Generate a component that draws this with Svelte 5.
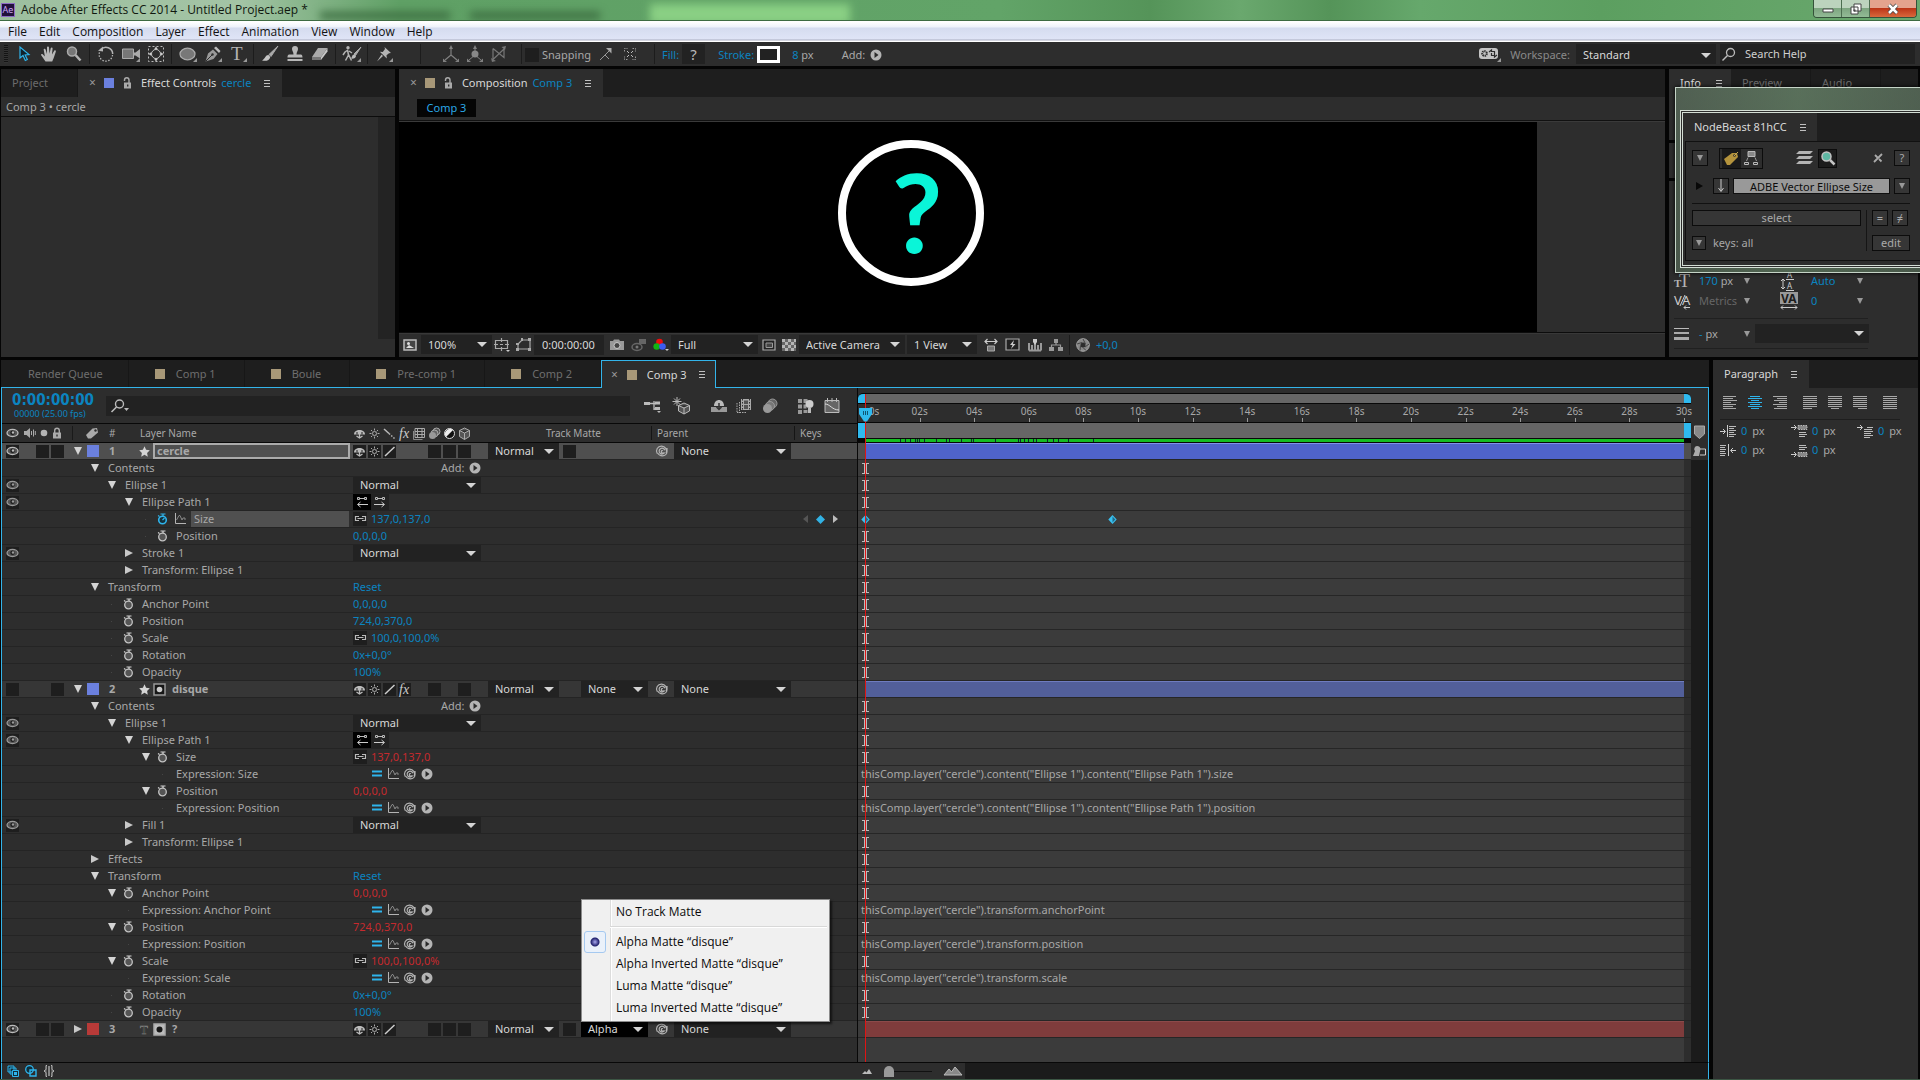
<script lang="ts">
  type Row = {
    kind: 'layer' | 'group' | 'prop' | 'expr';
    name: string;
    depth?: number;
    open?: boolean;
    leaf?: boolean;
    eye?: boolean;
    value?: string;
    red?: boolean;
    link?: boolean;
    add?: boolean;
    blend?: boolean;
    paths?: boolean;
    keyed?: boolean;
    code?: string;
    num?: number;
    color?: string;
    type?: string;
    matteIcon?: string;
    selected?: boolean;
    hidden?: boolean;
    av?: boolean[];
    switches?: string[];
    matte?: string;
    tbox?: boolean;
  };

  const menus = ['File', 'Edit', 'Composition', 'Layer', 'Effect', 'Animation', 'View', 'Window', 'Help'];
  const compTabs = ['Comp 1', 'Boule', 'Pre-comp 1', 'Comp 2'];
  const duration = 30;
  const secondKey = 9.06;
  const seconds = Array.from({ length: 16 }, (_, i) => i * 2);
  const matteModes = ['Alpha Matte “disque”', 'Alpha Inverted Matte “disque”', 'Luma Matte “disque”', 'Luma Inverted Matte “disque”'];
  const cacheGaps = [35, 40, 45, 50, 52, 54, 59, 71, 81, 84, 96, 106, 108, 130, 153, 155, 159, 163, 168, 171, 182, 188, 193, 203, 228];

  const rows: Row[] = [
    { kind: 'layer', name: 'cercle', num: 1, color: '#6b80de', type: 'star', selected: true, open: true, av: [true, true, true], switches: ['shy', 'sun', 'slash', '', '', 'box', 'box', 'box'], tbox: true },
    { kind: 'group', name: 'Contents', depth: 0, open: true, add: true },
    { kind: 'group', name: 'Ellipse 1', depth: 1, open: true, eye: true, blend: true },
    { kind: 'group', name: 'Ellipse Path 1', depth: 2, open: true, eye: true, paths: true },
    { kind: 'prop', name: 'Size', depth: 3, leaf: true, link: true, value: '137,0,137,0', keyed: true },
    { kind: 'prop', name: 'Position', depth: 3, leaf: true, value: '0,0,0,0' },
    { kind: 'group', name: 'Stroke 1', depth: 2, eye: true, blend: true },
    { kind: 'group', name: 'Transform: Ellipse 1', depth: 2 },
    { kind: 'group', name: 'Transform', depth: 0, open: true, value: 'Reset' },
    { kind: 'prop', name: 'Anchor Point', depth: 1, leaf: true, value: '0,0,0,0' },
    { kind: 'prop', name: 'Position', depth: 1, leaf: true, value: '724,0,370,0' },
    { kind: 'prop', name: 'Scale', depth: 1, leaf: true, link: true, value: '100,0,100,0%' },
    { kind: 'prop', name: 'Rotation', depth: 1, leaf: true, value: '0x+0,0°' },
    { kind: 'prop', name: 'Opacity', depth: 1, leaf: true, value: '100%' },
    { kind: 'layer', name: 'disque', num: 2, color: '#6b80de', type: 'star', matteIcon: 'matte', open: true, hidden: true, av: [true, false, true], switches: ['shy', 'sun', 'slash', 'fx', '', 'box', '', 'box'], matte: 'None' },
    { kind: 'group', name: 'Contents', depth: 0, open: true, add: true },
    { kind: 'group', name: 'Ellipse 1', depth: 1, open: true, eye: true, blend: true },
    { kind: 'group', name: 'Ellipse Path 1', depth: 2, open: true, eye: true, paths: true },
    { kind: 'prop', name: 'Size', depth: 3, open: true, link: true, value: '137,0,137,0', red: true },
    { kind: 'expr', name: 'Expression: Size', depth: 4, leaf: true, code: 'thisComp.layer("cercle").content("Ellipse 1").content("Ellipse Path 1").size' },
    { kind: 'prop', name: 'Position', depth: 3, open: true, value: '0,0,0,0', red: true },
    { kind: 'expr', name: 'Expression: Position', depth: 4, leaf: true, code: 'thisComp.layer("cercle").content("Ellipse 1").content("Ellipse Path 1").position' },
    { kind: 'group', name: 'Fill 1', depth: 2, eye: true, blend: true },
    { kind: 'group', name: 'Transform: Ellipse 1', depth: 2 },
    { kind: 'group', name: 'Effects', depth: 0 },
    { kind: 'group', name: 'Transform', depth: 0, open: true, value: 'Reset' },
    { kind: 'prop', name: 'Anchor Point', depth: 1, open: true, value: '0,0,0,0', red: true },
    { kind: 'expr', name: 'Expression: Anchor Point', depth: 2, leaf: true, code: 'thisComp.layer("cercle").transform.anchorPoint' },
    { kind: 'prop', name: 'Position', depth: 1, open: true, value: '724,0,370,0', red: true },
    { kind: 'expr', name: 'Expression: Position', depth: 2, leaf: true, code: 'thisComp.layer("cercle").transform.position' },
    { kind: 'prop', name: 'Scale', depth: 1, open: true, link: true, value: '100,0,100,0%', red: true },
    { kind: 'expr', name: 'Expression: Scale', depth: 2, leaf: true, code: 'thisComp.layer("cercle").transform.scale' },
    { kind: 'prop', name: 'Rotation', depth: 1, leaf: true, value: '0x+0,0°' },
    { kind: 'prop', name: 'Opacity', depth: 1, leaf: true, value: '100%' },
    { kind: 'layer', name: '?', num: 3, color: '#b83a38', type: 'text', matteIcon: 'matteInv', av: [true, true, true], switches: ['shy', 'sun', 'slash', '', '', 'box', 'box', 'box'], matte: 'Alpha', tbox: true },
  ];

  let menuOpen = $state(true);
  let matteMode = $state(0);

  const corner = '<path d="M18 13v4h-4z" fill="#999"/>';
  const lines = (xs: number[][]) => xs.map(([a, b], i) => `<path d="M${a} ${i * 2 + 0.5}H${b}"/>`).join('');

  // [width, height, body]
  const icons: Record<string, [number, number, string]> = {
    arrow: [18, 18, '<path d="M5 2v11l3-2.500 2.300 5 2-1-2.200-4.500 3.900-.5z" fill="#10222c" stroke="#2fb4ec" stroke-width="1.200"/>'],
    hand: [18, 18, '<path d="M5.500 16.500 1.200 10.300c-.6-1.100.8-1.800 1.700-.9l2 2L3.700 4.800c-.1-1.300 1.500-1.500 1.900-.3L7 9V2.600c0-1.400 1.900-1.400 2 0L9.500 8.700l1.200-5.500c.4-1.200 2-.9 1.900.4L12 9.500l2.200-3.700c.7-1 2-.3 1.600.9L13.700 13l-1.500 3.500z" fill="#b8b8b8"/>'],
    zoom: [18, 18, '<circle cx="7" cy="6.500" r="4.500" fill="#777" stroke="#aaa" stroke-width="1.500"/><path d="m10.500 10 5 5.500" stroke="#b4b4b4" stroke-width="2.500"/>'],
    rotate: [18, 18, '<path d="M4 4.500A6.700 6.700 0 0 1 15.700 9" fill="none" stroke="#b4b4b4" stroke-width="1.500"/><path d="M15.500 10A6.700 6.700 0 1 1 2.600 7" fill="none" stroke="#b4b4b4" stroke-width="1.300" stroke-dasharray="1.500 1.500"/><path d="m1 5.800 5-4.200v5z" fill="#b4b4b4"/>'],
    camera: [18, 18, '<path d="M.5 4h11v9.500H.5z" fill="#777" stroke="#aaa"/><path d="M12 7.500h1.500L18 4v9.500l-4.500-3H12z" fill="#aaa"/>' + corner],
    panBehind: [18, 18, '<path d="M1.500 1.500h15v15h-15z" fill="none" stroke="#bbb" stroke-dasharray="2 2"/><circle cx="9" cy="9" r="4.500" fill="none" stroke="#bbb"/><path d="m9 1.500 2 3H7zM9 16.500l2-3H7zM1.500 9l3-2v4zM16.500 9l-3-2v4z" fill="#ccc"/>'],
    ellipse: [18, 18, '<ellipse cx="8.500" cy="9" rx="7.500" ry="5.800" fill="#787878" stroke="#aaa" stroke-width="1.300"/>' + corner],
    pen: [18, 18, '<path d="M1.500 16.500 4 8.500l5-4 4.500 4.500-4 5z" fill="#999"/><path d="m2 16 6-6" stroke="#2d2d2d"/><circle cx="8.500" cy="9.500" r="1.200" fill="#2d2d2d"/><path d="m10 3 2-1.500 4.500 4.500L15 8z" fill="#bbb"/>' + corner],
    type: [18, 18, '<text x="2" y="15" font-family="Liberation Serif, serif" font-size="19" fill="#b4b4b4">T</text>' + corner],
    brush: [18, 18, '<path d="m17 1-9 8.500 2 2z" fill="#aaa" stroke="#aaa"/><path d="M7.500 10c-3-.3-3 3.500-6.500 5.500 4 1 7.500 0 8.300-3.500z" fill="#c4c4c4"/>'],
    stamp: [18, 18, '<path d="M9 1a3 3 0 0 1 3 3c0 2-1.500 3-1.500 5.500H15c1.500 0 1.500 3 1.500 3h-15s0-3 1.500-3h4.500C7.500 7 6 6 6 4a3 3 0 0 1 3-3zM1.500 14h15v2h-15z" fill="#b8b8b8"/>'],
    eraser: [18, 18, '<path d="M7 3h9.500l-6.500 9H1z" fill="#aaa"/><path d="M1 12h9v3H1z" fill="#777"/><path d="m10 12 6.500-9v3.500L10 15z" fill="#c8c8c8"/>'],
    roto: [20, 18, '<circle cx="6" cy="2.800" r="1.700" fill="#b4b4b4"/><path d="m6 5-3 2-2 3M5.500 5l1 5-3 5.500M6.500 9.500l3 6M7 6l3 2" stroke="#b4b4b4" stroke-width="1.500" fill="none"/><path d="m19 2-7 7 1.500 1.500z" fill="#aaa" stroke="#aaa"/><path d="M12 9.500c-2 0-2 3-3 4 2.500.5 5-.5 5-2.500z" fill="#bbb"/><path d="M19 13v4h-4z" fill="#999"/>'],
    pin: [18, 18, '<path d="m9.500 2 6.500 6-2 .3-2.500 2 .3 3.200-7-6.700 3 .2 2.200-3zM6.500 9.500 8 11l-6 5.500z" fill="#b4b4b4"/>' + corner],
    axis: [18, 18, '<path d="M9 10V2M9 10l-6 5M9 10l6 5" stroke="#808080" fill="none" stroke-width="1.200"/><path d="m9 0 2 4H7zM1 13.500v3.500h4zM17 13.500v3.500h-4z" fill="#808080"/>'],
    axisBall: [18, 18, '<path d="M9 10V2M9 10l-6 5M9 10l6 5" stroke="#808080" fill="none"/><circle cx="9" cy="9" r="3.500" fill="#888"/><path d="m9 0 2 4H7zM1 13.500v3.500h4zM17 13.500v3.500h-4z" fill="#808080"/>'],
    axisView: [18, 18, '<path d="M3 3.500v11M3 3.500l11 9V3.500M3 14.500 14 4" stroke="#777" fill="none" stroke-width="1.200"/><path d="m16 1-4.500 1 3.500 3zM1 13l1 4 4-1z" fill="#777"/>'],
    snapA: [14, 14, '<path d="m1 13 5-5 4 4M6 8l6-6" stroke="#999" fill="none"/><path d="M7 1h5.500v5.500z" fill="#aaa"/>'],
    snapB: [14, 14, '<path d="M1.500 4.500v-3h3M9.500 1.500h3v3M12.500 9.500v3h-3M4.500 12.500h-3v-3" stroke="#999" fill="none" stroke-dasharray="1.500 1"/><path d="m4 4 2 2M10 4 8 6M4 10l2-2M10 10 8 8" stroke="#bbb"/>'],
    play: [12, 12, '<circle cx="6" cy="6" r="5.500" fill="#b4b4b4"/><path d="m4.500 3 4 3-4 3z" fill="#2a2a2a"/>'],
    sync: [22, 16, '<rect x="0" y="2" width="19" height="11" rx="3" fill="#c4c4c4"/><circle cx="5.500" cy="7.500" r="2.300" fill="none" stroke="#2d2d2d" stroke-width="2" stroke-dasharray="1.300 .6"/><path d="M10 6l2.500-2v1.500h3v4M18 9l-2.500 2v-1.500h-3V7" fill="none" stroke="#2d2d2d" stroke-width="1.200"/><path d="M22 12v4h-4z" fill="#999"/>'],
    search: [14, 14, '<circle cx="8.500" cy="5.500" r="4" fill="none" stroke="#bbb" stroke-width="1.300"/><path d="m5.500 8.500-5 5" stroke="#bbb" stroke-width="1.500"/>'],
    searchDrop: [20, 14, '<circle cx="8.500" cy="5" r="4" fill="none" stroke="#bbb" stroke-width="1.400"/><path d="m5.500 8-5 5" stroke="#bbb" stroke-width="1.600"/><path d="M13 9h5l-2.500 3z" fill="#bbb"/>'],
    lock: [9, 12, '<path d="M1.500 4V3a2.200 2.200 0 0 1 4.500 0v3" fill="none" stroke="#aaa" stroke-width="1.400"/><path d="M1 5.500h7v6H1z" fill="#aaa"/><path d="M4 7.500h1.400v2H4z" fill="#2d2d2d"/>'],
    lockShut: [10, 12, '<path d="M2.700 6V3.500a2.200 2.200 0 0 1 4.600 0V6" fill="none" stroke="#aaa" stroke-width="1.400"/><path d="M1 5.500h8v6H1z" fill="#aaa"/><path d="M4.300 7.500h1.400v2H4.300z" fill="#2d2d2d"/>'],
    burger: [8, 9, '<path d="M1 1.500h6M1 4.500h6M1 7.500h6" stroke="#c0c0c0"/>'],
    eye: [13, 10, '<ellipse cx="6.500" cy="5" rx="5.500" ry="3.600" fill="#555" stroke="currentColor" stroke-width="1.300"/><circle cx="6.500" cy="4.800" r="2.200" fill="#1e1e1e"/><circle cx="7" cy="4.500" r="1.200" fill="currentColor"/>'],
    speaker: [13, 12, '<path d="M1 4h2.500L7 1v10L3.500 8H1z" fill="#aaa"/><path d="M8.500 4v4M10.500 2.500v7M12.300 4v4" stroke="#aaa"/>'],
    dot: [8, 8, '<circle cx="4" cy="4" r="3.300" fill="#b4b4b4"/>'],
    tag: [14, 12, '<path d="m1 8 6.500-6.500L12 1l1 4.500L6 11.500H3z" fill="#aaa"/><circle cx="10.500" cy="3.500" r="1.200" fill="#2d2d2d"/>'],
    star: [11, 11, '<path d="m5.500.3 1.600 3.500 3.700.5-2.700 2.600.7 3.800-3.300-1.900-3.300 1.900.7-3.800L.2 4.300l3.700-.5z" fill="#d4d4d4"/>'],
    text: [11, 12, '<text x="1" y="11" font-family="Liberation Serif, serif" font-size="13" fill="#0a0a0a" stroke="#888" stroke-width=".5">T</text>'],
    matte: [13, 13, '<path d="M1 1h11v11H1z" fill="#161616" stroke="#999" stroke-width="1.500"/><circle cx="6.500" cy="6.500" r="2.800" fill="#ccc"/>'],
    matteInv: [13, 13, '<path d="M1 1h11v11H1z" fill="#bbb" stroke="#aaa" stroke-width="1.500"/><circle cx="6.500" cy="6.500" r="3" fill="#161616"/>'],
    shy: [13, 13, '<path d="M1 7.500C1 4.500 3.500 3 6.500 3S12 4.500 12 7.500z" fill="#bbb"/><path d="M4 5v2.500M9 5v2.500" stroke="#222"/><path d="M6.500 7v4M3.500 9l3 2 3-2" stroke="#bbb" fill="none" stroke-width="1.300"/>'],
    sun: [13, 13, '<circle cx="6.500" cy="6.500" r="2" fill="none" stroke="currentColor"/><path d="M6.500 1.500v2M6.500 9.500v2M1.500 6.500h2M9.500 6.500h2M3 3l1.300 1.300M8.700 8.700 10 10M3 10l1.300-1.300M8.700 4.300 10 3" stroke="currentColor"/>'],
    slash: [13, 13, '<path d="M2 11 11.500 2" stroke="#ccc" stroke-width="1.500"/>'],
    quality: [13, 13, '<path d="m1 2 5 4.500" stroke="#bbb" stroke-width="1.500"/><path d="m6 6.500 5.500 5" stroke="#bbb" stroke-width="1.500" stroke-dasharray="1.500 1.500"/>'],
    fx: [13, 13, '<text x="1" y="11" font-family="Liberation Serif, serif" font-style="italic" font-size="14" fill="#ccc">fx</text>'],
    film: [13, 13, '<path d="M2 1.500h9.500v9H2z" fill="none" stroke="#aaa"/><path d="M4.500 1v10M9 1v10M2 4.500h9.500M2 7.500h9.500" stroke="#aaa"/><path d="M.5 4v8.500h9" fill="none" stroke="#888"/>'],
    blur: [13, 13, '<circle cx="8.500" cy="4.500" r="3.500" fill="#555" stroke="#aaa"/><circle cx="6.500" cy="6.500" r="3.500" fill="#666" stroke="#aaa"/><circle cx="4.500" cy="8.500" r="3.500" fill="#999"/>'],
    adjust: [13, 13, '<circle cx="6.500" cy="6.500" r="5" fill="#111" stroke="#ddd"/><path d="M3 10 10 3A5 5 0 0 0 3 10z" fill="#eee"/>'],
    cube: [13, 13, '<path d="m6.500 1 5 2.500v6l-5 3-5-3v-6zM1.500 3.500l5 2.500 5-2.500M6.500 6v6.500" fill="#555" stroke="#aaa"/>'],
    stopwatch: [11, 12, '<circle cx="5.500" cy="7" r="3.800" fill="#555" stroke="#c4c4c4" stroke-width="1.300"/><path d="M3.500 1h5M6 1v2M1 2.500l1.500 1" stroke="#d4d4d4" stroke-width="1.200"/>'],
    stopwatchOn: [11, 12, '<circle cx="5.500" cy="7" r="3.800" fill="#12303c" stroke="#2fb4ec" stroke-width="1.600"/><path d="M3.500 1h5M6 1v2M1 2.500l1.500 1M5.500 7l2-2" stroke="#2fb4ec" stroke-width="1.200"/>'],
    graph: [12, 12, '<path d="M1.500 0v10.500H12" fill="none" stroke="#b4b4b4"/><path d="M2.500 7 5 2.500h1L8 7l1-2h2v2" fill="none" stroke="#888"/>'],
    whip: [12, 12, '<path d="M1.200 8.500A5 5 0 1 1 10 8.300M11 3v3.500c0 2.400-2 4.300-4.500 4.300-2.500 0-4-1.200-5-2.800M8.600 7.500A2.900 2.900 0 1 1 8.800 5.200M8.600 7.500C7.500 8.700 5.300 8.200 5.300 6.500 5.300 5.500 6.500 5.300 6.800 6" fill="none" stroke="#b4b4b4" stroke-width="1.200"/>'],
    equal: [10, 8, '<path d="M0 1.500h10M0 5.500h10" stroke="#2fb4ec" stroke-width="2"/>'],
    link: [13, 8, '<path d="M5 1.500H1.500v4H5M8 1.500h3.500v4H8M3.500 3.500h6" fill="none" stroke="#bbb" stroke-width="1.200"/>'],
    pathL: [12, 12, '<path d="M4 2.500h4" stroke="#bbb"/><path d="M1.500 1.500h2v2h-2zM8.500 1.500h2v2h-2z" fill="#222" stroke="#bbb"/><path d="M2 8.500h10M4.500 6 1.500 8.500l3 2.500" fill="none" stroke="#ccc"/>'],
    pathR: [12, 12, '<path d="M4 2.500h4" stroke="#bbb"/><path d="M1.500 1.500h2v2h-2zM8.500 1.500h2v2h-2z" fill="#222" stroke="#bbb"/><path d="M0 8.500h10M7.500 6l3 2.500-3 2.500" fill="none" stroke="#ccc"/>'],
    flow: [18, 14, '<path d="M0 4.500h5M5 3v3M6 4.500h4M10 2v9M10 4.500h2M10 10h2" stroke="#bbb" fill="none" stroke-width="1.300"/><path d="M0 3h6v3H0zM11 2.500h5v3h-5zM11 8h5v3h-5z" fill="#bbb"/><path d="M13 12h4l-2 2z" fill="#bbb"/>'],
    draft: [20, 18, '<path d="M5 0v9M.500 4.500h9M2 1.500l6 6M8 1.500l-6 6" stroke="#bbb"/><path d="m12 6 5.500 2.500v5.500L12 17l-5.500-3V8.500zM6.500 8.500 12 11l5.500-2.500M12 11v6" fill="#555" stroke="#bbb"/>'],
    shyBig: [16, 16, '<path d="M0 9h16v5H0z" fill="#999"/><path d="M3 8c0-4 2.500-6 5-6s5 2 5 6z" fill="#bbb"/><path d="M8 5v6M5.500 9 8 11.500 10.500 9" stroke="#333" fill="none" stroke-width="1.500"/>'],
    filmBig: [16, 16, '<path d="M5 1h10v11H5z" fill="#aaa"/><path d="M8 2.500h4v3.500H8zM8 7h4v4H8z" fill="#555"/><path d="M6.500 1v11M13.500 1v11" stroke="#333" stroke-dasharray="1.500 1.500"/><path d="M1 5v10M3.500 4v11M1 14.500h9" stroke="#aaa" stroke-dasharray="1.500 1"/>'],
    blurBig: [16, 16, '<circle cx="10.500" cy="5.500" r="4.500" fill="#666" stroke="#999"/><circle cx="8" cy="8" r="4.500" fill="#777" stroke="#999"/><circle cx="5.500" cy="10.500" r="4.500" fill="#999"/>'],
    brain: [18, 16, '<path d="M1 1h4v4H1zM6.500 1h4v4h-4zM1 6.500h4v4H1zM6.500 6.500h3v4h-3zM1 12h4v4H1zM6.500 12h4v3h-4z" fill="#999"/><circle cx="12.500" cy="6" r="4" fill="#ccc"/><path d="M11 10h3v5h-3z" fill="#bbb"/>'],
    graphBig: [16, 16, '<path d="M1 2.500h14v12H1z" fill="#666" stroke="#bbb"/><path d="M1 6c5 0 7 6 14 6" stroke="#ddd" fill="none"/><path d="M3.500 0v4M8 0v4M12.500 0v4" stroke="#bbb"/>'],
    monitor: [14, 12, '<path d="M1 1h12v10H1z" fill="#444" stroke="#bbb" stroke-width="1.500"/><path d="m3 9 3-3 5 3z" fill="#ddd"/><circle cx="5.500" cy="4.500" r="1.500" fill="#ddd"/>'],
    grid: [16, 14, '<path d="M1.500 2.500h12v8h-12zM7.500 0v4M7.500 9v4M0 6.500h4M11 6.500h4M6 6.500h3" fill="none" stroke="#aaa" stroke-width="1.200"/><path d="M12 12h4l-2 2z" fill="#ccc"/>'],
    mask: [16, 14, '<path d="M2 11V6l4-4h8v9z" fill="none" stroke="#aaa" stroke-width="1.200"/><path d="M0 10h3v3H0zM12 10h3v3h-3zM12 0h3v3h-3zM5 0h2v3H5zM0 5h3v2H0z" fill="#aaa"/>'],
    photo: [16, 12, '<path d="M1 2h3l1-1.500h5L11 2h4v9H1z" fill="#999"/><circle cx="8" cy="6.500" r="3" fill="#444" stroke="#ccc"/>'],
    eyeCam: [16, 14, '<ellipse cx="6" cy="9" rx="5" ry="3.500" fill="none" stroke="#666" stroke-width="1.500"/><circle cx="6" cy="9" r="1.500" fill="#777"/><path d="M8 1h7v5H8z" fill="#666"/>'],
    rgb: [16, 14, '<circle cx="6.500" cy="4" r="3.300" fill="#f00c0c"/><circle cx="3.700" cy="8.500" r="3.300" fill="#12b412"/><circle cx="9.500" cy="8.500" r="3.300" fill="#3c5cf0"/><path d="M12 11h4l-2 2z" fill="#ccc"/>'],
    roi: [14, 12, '<path d="M1 1h12v10H1z" fill="#222" stroke="#aaa" stroke-width="1.200"/><path d="M4 4h6.500v4.500H4z" fill="#444" stroke="#999"/>'],
    checker: [14, 12, '<path d="M0 0h14v12H0z" fill="#666"/><path d="M0 0h3v3H0zM6 0h3v3H6zM12 0h2v3h-2zM3 3h3v3H3zM9 3h3v3H9zM0 6h3v3H0zM6 6h3v3H6zM12 6h2v3h-2zM3 9h3v3H3zM9 9h3v3H9z" fill="#b4b4b4"/>'],
    ratio: [16, 14, '<path d="M2 3.500h12M4.500 1 2 3.500 4.500 6M11.500 1 14 3.500 11.500 6" fill="none" stroke="#ccc" stroke-width="1.200"/><path d="M4.500 8h7v5h-7z" fill="#777" stroke="#aaa"/>'],
    fast: [16, 14, '<path d="M1 1h13v11H1z" fill="#222" stroke="#aaa" stroke-width="1.200"/><path d="m9 2-4 5h2.500L6 11l4.500-5H8z" fill="#ccc"/>'],
    tl: [16, 12, '<path d="M2 11.500V4M5 11.500V6M8 11.500V4M11 11.500V6M14 11.500V4M2 11.500h12" stroke="#999" stroke-width="2"/><path d="M6 0h4v3L8 6 6 3z" fill="#ccc"/>'],
    chart: [14, 12, '<path d="M5 0h4v4H5zM0 8h5v4H0zM9 8h5v4H9z" fill="#999"/><path d="M7 4v2M2.500 8V6h9v2" fill="none" stroke="#999" stroke-width="1.200"/>'],
    shutter: [14, 14, '<circle cx="7" cy="7" r="6.300" fill="#888" stroke="#aaa"/><circle cx="7" cy="7" r="2.500" fill="#2d2d2d"/><path d="M7 1 9.500 6M13 6 9 9M10 12.500 7 9.500M4 12.500 4.500 7.500M1 6l5-1.500" stroke="#444"/>'],
    left: [14, 14, `<g stroke="currentColor">${lines([[0, 13], [0, 10], [0, 14], [0, 8], [0, 13], [0, 10], [0, 13]])}</g>`],
    center: [14, 14, `<g stroke="currentColor">${lines([[2, 12], [0, 14], [3, 11], [0, 14], [2, 12], [0, 14], [3, 11]])}</g>`],
    right: [14, 14, `<g stroke="currentColor">${lines([[0, 14], [4, 14], [1, 14], [6, 14], [0, 14], [4, 14], [1, 14]])}</g>`],
    justL: [14, 14, `<g stroke="currentColor">${lines([[0, 14], [0, 14], [0, 14], [0, 14], [0, 14], [0, 14], [0, 9]])}</g>`],
    justC: [14, 14, `<g stroke="currentColor">${lines([[0, 14], [0, 14], [0, 14], [0, 14], [0, 14], [0, 14], [3, 11]])}</g>`],
    justR: [14, 14, `<g stroke="currentColor">${lines([[0, 14], [0, 14], [0, 14], [0, 14], [0, 14], [0, 14], [5, 14]])}</g>`],
    justA: [14, 14, `<g stroke="currentColor">${lines([[0, 14], [0, 14], [0, 14], [0, 14], [0, 14], [0, 14], [0, 14]])}</g>`],
    indentL: [16, 14, '<path d="M0 7.500h5M3 5l2.500 2.500L3 10M7.500 1v12" fill="none" stroke="#ccc"/><path d="M9 2.500h7M9 4.500h5M9 6.500h7M9 8.500h5M9 10.500h7M9 12.500h5" stroke="#bbb"/>'],
    indentR: [16, 14, '<path d="M16 7.500h-5M13 5l-2.500 2.500L13 10M8.500 1v12" fill="none" stroke="#ccc"/><path d="M0 2.500h6M0 4.500h5M0 6.500h6M0 8.500h5M0 10.500h6M0 12.500h5" stroke="#bbb"/>'],
    before: [16, 14, '<path d="M0 3.500h5M3 1l2.500 2.500L3 6" fill="none" stroke="#ccc"/><path d="M7 1.500h9v4H7z" fill="#888" stroke="#bbb" stroke-dasharray="1.500 1"/><path d="M8 8.500h7M8 10.500h8M8 12.500h6" stroke="#bbb"/>'],
    after: [16, 14, '<path d="M0 11.500h5M3 9l2.500 2.500L3 14" fill="none" stroke="#ccc"/><path d="M7 9.500h9v4H7z" fill="#888" stroke="#bbb" stroke-dasharray="1.500 1"/><path d="M8 2.500h7M8 4.500h8M8 6.500h6" stroke="#bbb"/>'],
    first: [16, 14, '<path d="M0 3.500h5M3 1l2.500 2.500L3 6" fill="none" stroke="#ccc"/><path d="M10 3.500h6M7 5.500h8M7 7.500h9M7 9.500h7M7 11.500h9M7 13.500h6" stroke="#bbb"/>'],
    fontSize: [16, 14, '<text x="0" y="13" font-family="Liberation Serif, serif" font-weight="bold" font-size="11" fill="#b4b4b4">T</text><text x="5" y="13" font-family="Liberation Serif, serif" font-size="18" fill="#b4b4b4">T</text>'],
    leading: [16, 20, '<text x="7" y="7" font-family="Noto Sans, sans-serif" font-size="8" fill="#ccc">A</text><text x="7" y="18" font-family="Noto Sans, sans-serif" font-size="8" fill="#ccc">A</text><path d="M3 8v10M1 10l2-2 2 2M1 16l2 2 2-2M6 8.500h8M6 19.500h8" fill="none" stroke="#ccc"/>'],
    kerning: [18, 16, '<text x="0" y="12" font-family="Noto Sans, sans-serif" font-size="13" fill="#ccc">V</text><text x="8" y="12" font-family="Noto Sans, sans-serif" font-size="13" fill="#ccc">A</text><path d="M11 2 6 13M10 14.500h6M12 12.500l-2 2 2 2" fill="none" stroke="#ccc"/>'],
    tracking: [18, 18, '<path d="M0 0h18v12H0z" fill="#999"/><text x="1" y="11" font-family="Noto Sans, sans-serif" font-weight="bold" font-size="12" fill="#1c1c1c">VA</text><path d="M1 15.500h16M3 13.500l-2 2 2 2M15 13.500l2 2-2 2" fill="none" stroke="#ccc"/>'],
    strokeW: [15, 14, '<path d="M0 1.500h15" stroke="#bbb"/><path d="M0 6h15" stroke="#aaa" stroke-width="2"/><path d="M0 11.500h15" stroke="#aaa" stroke-width="3"/>'],
    gold: [17, 16, '<path d="m1 9 8-6h5l1 4-8 8H4z" fill="#b4933c"/><circle cx="11.500" cy="5.500" r="1.300" fill="#2a2a2a"/><path d="m11 6 4-4" stroke="#c8a850"/>'],
    tree: [16, 16, '<path d="M5 1.500h7v5H5z" fill="#888" stroke="#bbb"/><path d="M5 7.500 3.500 11M12 7.500l1.500 3.500" fill="none" stroke="#999"/><path d="M1.500 12.500h4v2h-4zM10.500 12.500h4v2h-4z" fill="#333" stroke="#bbb"/>'],
    stack: [18, 14, '<path d="M3 0h14l-3 3H0zM3 5h14l-3 3H0zM3 10h14l-3 3H0z" fill="#b4b4b4"/>'],
    lens: [16, 16, '<circle cx="6.500" cy="6.500" r="4.500" fill="#5fb8a4" stroke="#c4c4c4" stroke-width="1.500"/><path d="m10 10 4.500 4.500" stroke="#c4c4c4" stroke-width="2.500"/>'],
    cross: [10, 10, '<path d="m1 9 8-8M2 2l2.500 2.500M6 6l2.500 2.500" stroke="#aaa" stroke-width="1.800"/>'],
    down: [8, 14, '<path d="M4 0v12M1.500 9 4 12.500 6.500 9" fill="none" stroke="#ccc"/>'],
    layersBlue: [12, 12, '<path d="M1 1h6v6H1zM3 3h6v6H3z" fill="#10303c" stroke="#2fb4ec"/><path d="M5.500 5.500h6v6h-6z" fill="#10303c" stroke="#2fb4ec"/><path d="M7 7h3v3H7z" fill="#2fb4ec"/>'],
    modesBlue: [12, 12, '<circle cx="4.500" cy="4.500" r="3.800" fill="#10303c" stroke="#2fb4ec" stroke-width="1.300"/><path d="M5 5h6v6H5z" fill="none" stroke="#2fb4ec" stroke-width="1.400"/>'],
    braces: [12, 12, '<path d="M4 .5H3v4L1 6l2 1.500v4h1M8 .5h1v4L11 6 9 7.500v4H8" fill="#555" stroke="#bbb"/><path d="M5 1h2v10H5z" fill="#888"/>'],
    hills: [10, 6, '<path d="m0 6 3-3 1.500 1.500L7 1l3 5z" fill="#bbb"/>'],
    hillsBig: [18, 8, '<path d="m0 8 5-6 2.500 3L11 0l7 8z" fill="#888" stroke="#bbb"/>'],
    shield: [11, 14, '<path d="M.5 1h10v8l-5 4.500-5-4.500z" fill="#888" stroke="#aaa"/>'],
    compBtn: [13, 12, '<path d="M4 1a3.500 3.500 0 0 1 3.500 3L6 11H0l2-5A3 3 0 0 1 4 1z" fill="#aaa"/><path d="M7 4h5.500v6H7" fill="none" stroke="#ccc"/>'],
    cti: [13, 14, '<path d="M0 0h13v6L8 13.500H5L0 6z" fill="#2fb9ee"/><path d="M4.500 3v4M6.500 3v4M8.500 3v4" stroke="#0e5674"/>'],
    ibeam: [9, 13, '<path d="M1 1.500h3M5 1.500h3M1 11.500h3M5 11.500h3" fill="none" stroke="#bbb"/><path d="M3.500 1v11M5.500 1v11" stroke="#bbb"/>'],
    key: [9, 9, '<path d="m4.500 0 4.200 4.500L4.500 9 .3 4.500z" fill="#38c0f0"/><path d="M4.500 1.500 7.300 4.500 4.500 7.500z" fill="#226a88"/>'],
    keyNow: [9, 9, '<path d="m4.500 0 4.500 4.500L4.500 9 0 4.500z" fill="#32b2e4"/>'],
  };
</script>

{#snippet icon(name: string)}
  <svg width={icons[name][0]} height={icons[name][1]} viewBox="0 0 {icons[name][0]} {icons[name][1]}" aria-hidden="true">{@html icons[name][2]}</svg>
{/snippet}

{#snippet dropdown(label: string, value: string, cls: string)}
  <span class="drop {cls}">
    <select aria-label={label}><option>{value}</option></select>
    <i></i>
  </span>
{/snippet}

{#snippet twirl(open: boolean | undefined, leaf: boolean | undefined)}
  <span class="twirl" class:open class:leaf></span>
{/snippet}

<div class="app">
  <header class="titlebar">
    <span class="ae">Ae</span>
    <span class="title">Adobe After Effects CC 2014 - Untitled Project.aep *</span>
    <span class="ghost g1"></span>
    <span class="ghost g2"></span>
    <span class="ghost g3"></span>
    <div class="winbtns">
      <button type="button" aria-label="Minimize"><svg width="12" height="10"><path d="M1 5h10v3H1z" fill="#fff" stroke="#444" /></svg></button>
      <button type="button" aria-label="Restore"><svg width="12" height="12"><path d="M4 1h7v7H4zM1 4h7v7H1z" fill="#fff" stroke="#444" /><path d="M3.500 6.500h2v2h-2z" fill="#444" /></svg></button>
      <button type="button" class="close" aria-label="Close"><svg width="12" height="10"><path d="m2 1 8 8M10 1 2 9" stroke="#444" stroke-width="4" /><path d="m2 1 8 8M10 1 2 9" stroke="#fff" stroke-width="2.500" /></svg></button>
    </div>
  </header>

  <nav class="menubar">
    {#each menus as item}<button type="button">{item}</button>{/each}
  </nav>

  <div class="toolbar">
    <span class="grip"></span>
    {#each ['arrow', 'hand', 'zoom', '|', 'rotate', 'camera', 'panBehind', '|', 'ellipse', 'pen', 'type', '|', 'brush', 'stamp', 'eraser', '|', 'roto', '|', 'pin'] as tool}
      {#if tool === '|'}<span class="sep"></span>{:else}<button type="button" class="tool" aria-label={tool}>{@render icon(tool)}</button>{/if}
    {/each}
    <span class="sep wide"></span>
    <span class="axes">{@render icon('axis')}{@render icon('axisBall')}{@render icon('axisView')}</span>
    <span class="sep"></span>
    <label class="snap low"><input type="checkbox" />Snapping</label>
    <span class="snaps">{@render icon('snapA')}{@render icon('snapB')}</span>
    <span class="sep"></span>
    <button type="button" class="blue low">Fill:</button>
    <button type="button" class="fill">?</button>
    <button type="button" class="blue low">Stroke:</button>
    <button type="button" class="swatch" aria-label="Stroke color"></button>
    <span class="px low"><b>8</b> px</span>
    <button type="button" class="add low">Add: {@render icon('play')}</button>
    <span class="grow"></span>
    {@render icon('sync')}
    <span class="ws low">Workspace:</span>
    {@render dropdown('Workspace', 'Standard', 'tall standard')}
    <label class="help">{@render icon('search')}<input value="Search Help" aria-label="Search Help" /></label>
  </div>

  <div class="upper">
    <section class="panel effects">
      <div class="tabs">
        <button type="button" class="tab dim project">Project</button>
        <div class="tab on"><span class="x">×</span><i class="chip violet"></i>{@render icon('lock')}<span>Effect Controls <em>cercle</em></span>{@render icon('burger')}</div>
      </div>
      <p class="crumb">Comp 3 • cercle</p>
      <div class="fxbody"><span></span></div>
    </section>

    <section class="panel comp">
      <div class="tabs">
        <div class="tab on"><span class="x">×</span><i class="chip"></i>{@render icon('lock')}<span>Composition <em>Comp 3</em></span>{@render icon('burger')}</div>
      </div>
      <div class="flowbar"><button type="button">Comp 3</button></div>
      <div class="viewer">
        <div class="canvas">
          <div class="badge">?</div>
        </div>
      </div>
      <div class="viewbar">
        {@render icon('monitor')}
        {@render dropdown('Magnification', '100%', 'tall mag')}
        {@render icon('grid')}{@render icon('mask')}
        <span class="tc">0:00:00:00</span>
        {@render icon('photo')}{@render icon('eyeCam')}{@render icon('rgb')}
        {@render dropdown('Resolution', 'Full', 'tall res')}
        {@render icon('roi')}{@render icon('checker')}
        {@render dropdown('3D view', 'Active Camera', 'tall cam')}
        {@render dropdown('View layout', '1 View', 'tall views')}
        {@render icon('ratio')}{@render icon('fast')}{@render icon('tl')}{@render icon('chart')}
        <span class="sep"></span>
        {@render icon('shutter')}
        <span class="bluetext">+0,0</span>
      </div>
    </section>

    <section class="panel side">
      <div class="tabs">
        <div class="tab on info">Info {@render icon('burger')}</div>
        <button type="button" class="tab dim">Preview</button>
        <button type="button" class="tab dim">Audio</button>
      </div>
      <div class="strip"></div>
      <div class="strip second"></div>
      <div class="chars">
        <div class="crow">
          {@render icon('fontSize')}<span class="cv"><b>170</b> px</span><i class="tri"></i>
          {@render icon('leading')}<span class="cv"><b>Auto</b></span><i class="tri"></i>
        </div>
        <div class="crow">
          {@render icon('kerning')}<span class="cv off">Metrics</span><i class="tri"></i>
          {@render icon('tracking')}<span class="cv"><b>0</b></span><i class="tri"></i>
        </div>
        <div class="crow last">
          {@render icon('strokeW')}<span class="cv"><b>-</b> px</span><i class="tri"></i>
          {@render dropdown('Stroke order', '', 'tall order')}
        </div>
      </div>

      <div class="floating">
        <div class="inner">
          <div class="tabs"><div class="tab on">NodeBeast 81hCC {@render icon('burger')}</div></div>
          <div class="beast">
            <div class="brow first">
              <button type="button" class="sq" aria-label="Menu"><i class="tri"></i></button>
              <span class="pair"><button type="button" class="on" aria-label="Tag">{@render icon('gold')}</button><button type="button" aria-label="Tree">{@render icon('tree')}</button></span>
              {@render icon('stack')}
              <button type="button" class="sq lens" aria-label="Find">{@render icon('lens')}</button>
              <span class="grow"></span>
              {@render icon('cross')}
              <button type="button" class="sq q">?</button>
            </div>
            <div class="brow">
              <i class="play"></i>
              <button type="button" class="sq" aria-label="Down">{@render icon('down')}</button>
              <input class="target" value="ADBE Vector Ellipse Size" aria-label="Property" />
              <button type="button" class="sq" aria-label="Choose"><i class="tri"></i></button>
            </div>
            <div class="bgrid">
              <div class="bleft">
                <button type="button" class="sq full">select</button>
                <div class="keys"><button type="button" class="sq small" aria-label="Keys"><i class="tri"></i></button>keys: all</div>
              </div>
              <div class="bright">
                <div><button type="button" class="sq">=</button><button type="button" class="sq">≠</button></div>
                <button type="button" class="sq edit">edit</button>
              </div>
            </div>
          </div>
        </div>
      </div>
    </section>
  </div>

  <div class="lower">
    <section class="timeline">
      <div class="tltabs">
        <button type="button" class="tltab queue">Render Queue</button>
        {#each compTabs as tab}<button type="button" class="tltab"><i class="chip"></i>{tab}</button>{/each}
        <div class="tltab on"><span class="x">×</span><i class="chip"></i>Comp 3{@render icon('burger')}</div>
      </div>

      <div class="tlmain">
        <div class="layers">
          <div class="tlhead">
            <div class="clock"><strong>0:00:00:00</strong><small>00000 (25.00 fps)</small></div>
            <label class="find">{@render icon('searchDrop')}<input aria-label="Search layers" /></label>
            <div class="tools">
              <button type="button" aria-label="Mini-flowchart">{@render icon('flow')}</button>
              <button type="button" aria-label="Draft 3D">{@render icon('draft')}</button>
              <span></span>
              <button type="button" aria-label="Hide shy layers">{@render icon('shyBig')}</button>
              <button type="button" aria-label="Frame blending">{@render icon('filmBig')}</button>
              <button type="button" aria-label="Motion blur">{@render icon('blurBig')}</button>
              <span></span>
              <button type="button" aria-label="Brainstorm">{@render icon('brain')}</button>
              <button type="button" aria-label="Graph editor">{@render icon('graphBig')}</button>
            </div>
          </div>
          <div class="row cols">
            <span class="av">{@render icon('eye')}{@render icon('speaker')}{@render icon('dot')}{@render icon('lockShut')}</span>
            <span class="ident">{@render icon('tag')}<span>#</span></span>
            <span class="lname">Layer Name</span>
            <span class="sw">{#each ['shy', 'sun', 'quality', 'fx', 'film', 'blur', 'adjust', 'cube'] as s}<i>{@render icon(s)}</i>{/each}</span>
            <span class="tm">Track Matte</span>
            <span class="par">Parent</span>
            <span class="ky">Keys</span>
          </div>

          {#each rows as row}
            {#if row.kind === 'layer'}
              <div class="row layer" class:selected={row.selected}>
                <span class="av">
                  <i class="cell">{#if !row.hidden}{@render icon('eye')}{/if}</i><i></i>
                  <i class:cell={row.av?.[1]}></i><i class="cell"></i>
                </span>
                <span class="ident">{@render twirl(row.open, false)}<i class="label" style="background: {row.color}"></i><b>{row.num}</b></span>
                <span class="lname">
                  {@render icon(row.type ?? 'star')}
                  {#if row.matteIcon}{@render icon(row.matteIcon)}{/if}
                  <b class:boxed={row.selected}>{row.name}</b>
                </span>
                <span class="sw">{#each row.switches ?? [] as s}<i class:cell={s}>{#if s && s !== 'box'}{@render icon(s)}{/if}</i>{/each}</span>
                {@render dropdown('Blend mode', 'Normal', 'mode')}
                <i class="t" class:cell={row.tbox}></i>
                <span class="matteslot">
                  {#if row.matte === 'Alpha'}
                    <button type="button" class="alpha" aria-haspopup="menu" aria-expanded={menuOpen} onclick={() => (menuOpen = !menuOpen)}>Alpha<i></i></button>
                    {#if menuOpen}
                      <div class="popup" role="menu">
                        <button type="button" role="menuitem">No Track Matte</button>
                        <hr />
                        {#each matteModes as mode, i}
                          <button type="button" role="menuitemradio" aria-checked={i === matteMode} onclick={() => (matteMode = i)}>{mode}</button>
                        {/each}
                      </div>
                    {/if}
                  {:else if row.matte}
                    {@render dropdown('Track matte', row.matte, 'matte')}
                  {/if}
                </span>
                <span class="pw">{@render icon('whip')}</span>
                {@render dropdown('Parent', 'None', 'parent')}
              </div>
            {:else}
              <div class="row">
                <span class="av dimmed">{#if row.eye}<i class="cell">{@render icon('eye')}</i>{/if}</span>
                <span class="names d{row.depth}">
                  {@render twirl(row.open, row.leaf)}
                  {#if row.kind === 'prop'}<span class="slot">{@render icon(row.keyed ? 'stopwatchOn' : 'stopwatch')}</span>{/if}
                  {#if row.keyed}<span class="slot">{@render icon('graph')}</span>{/if}
                  <span class="nm" class:hl={row.keyed}>{row.name}</span>
                </span>
                <span class="vals">
                  {#if row.add}<span class="addc">Add: {@render icon('play')}</span>{/if}
                  {#if row.blend}{@render dropdown('Blend mode', 'Normal', 'blend')}{/if}
                  {#if row.paths}<i class="dir on">{@render icon('pathL')}</i><i class="dir">{@render icon('pathR')}</i>{/if}
                  {#if row.kind === 'expr'}<span class="ex">{@render icon('equal')}{@render icon('graph')}{@render icon('whip')}{@render icon('play')}</span>{/if}
                  {#if row.link}<i class="lk">{@render icon('link')}</i>{/if}
                  {#if row.value}<span class="val" class:red={row.red}>{row.value}</span>{/if}
                </span>
                {#if row.keyed}<span class="nav"><i class="prev"></i>{@render icon('keyNow')}<i class="next"></i></span>{/if}
              </div>
            {/if}
          {/each}
          <div class="rest"></div>
        </div>

        <div class="time">
          <div class="ruler">
            <div class="navbar"></div>
            <div class="ticks">
              {#each seconds as s}<span style="left: {(s / duration) * 100}%">{s === 0 ? '0s' : String(s).padStart(2, '0') + 's'}</span>{/each}
            </div>
            <div class="work"></div>
            <div class="cache">
              <div>{#each cacheGaps as gap}<i style="left: {gap / 8.19}%"></i>{/each}</div>
            </div>
          </div>
          {#each rows as row}
            <div class="trk" class:layer={row.kind === 'layer'} class:selected={row.selected}>
              {#if row.kind === 'layer'}
                <div class="bar" class:active={row.selected} class:text={row.type === 'text'}></div>
              {:else if row.code}
                <input class="code" value={row.code} aria-label={row.name} />
              {:else if row.keyed}
                <div class="keyline"><span>{@render icon('key')}</span><span style="margin-left: {(secondKey / duration) * 100}%">{@render icon('key')}</span></div>
              {:else}
                <span class="ib">{@render icon('ibeam')}</span>
              {/if}
            </div>
          {/each}
          <div class="rest"></div>
          <div class="playhead">{@render icon('cti')}</div>
        </div>

        <div class="gutter">
          {@render icon('shield')}
          <span>{@render icon('compBtn')}</span>
          <div></div>
        </div>
      </div>

      <div class="tlfoot">
        <div class="switches">{@render icon('layersBlue')}{@render icon('modesBlue')}{@render icon('braces')}</div>
        <div class="zoomer">{@render icon('hills')}<input type="range" min="0" max="100" value="0" aria-label="Timeline zoom" />{@render icon('hillsBig')}</div>
      </div>
    </section>

    <section class="panel paragraph">
      <div class="tabs"><div class="tab on">Paragraph {@render icon('burger')}</div></div>
      <div class="align">
        <button type="button" aria-label="Left">{@render icon('left')}</button>
        <button type="button" class="active" aria-label="Center">{@render icon('center')}</button>
        <button type="button" aria-label="Right">{@render icon('right')}</button>
        <span></span>
        <button type="button" aria-label="Justify last left">{@render icon('justL')}</button>
        <button type="button" aria-label="Justify last centered">{@render icon('justC')}</button>
        <button type="button" aria-label="Justify last right">{@render icon('justR')}</button>
        <span></span>
        <button type="button" aria-label="Justify all">{@render icon('justA')}</button>
      </div>
      <div class="indents">
        {#each ['indentL', 'before', 'first', 'indentR', 'after'] as name}
          <span>{@render icon(name)}<b>0</b> px</span>
        {/each}
      </div>
    </section>
  </div>
</div>

<style>
  :global(body) {
    margin: 0;
    background: #050505;
  }

  .app {
    display: flex;
    flex-direction: column;
    min-height: 100vh;
    box-sizing: border-box;
    border-bottom: 1px solid #3c5644;
    background: #050505;
    color: #a8a8a8;
    font: 11px/14px 'Noto Sans', 'Open Sans', sans-serif;
    overflow: hidden;
  }

  .app * {
    box-sizing: border-box;
  }

  svg {
    display: block;
    flex: none;
    overflow: visible;
  }

  i,
  em {
    font-style: normal;
  }

  p {
    margin: 0;
  }

  button,
  input,
  select {
    margin: 0;
    padding: 0;
    border: 0;
    border-radius: 0;
    background: none;
    color: inherit;
    font: inherit;
  }

  .grow {
    flex: 1;
  }

  /* window chrome */
  .titlebar {
    display: flex;
    align-items: center;
    gap: 6px;
    height: 21px;
    padding-left: 1px;
    position: relative;
    overflow: hidden;
    border-bottom: 1px solid #3d6b42;
    background: linear-gradient(90deg, #9dbf9f, #a3c4a5 240px, #5fa065 400px, #62a468 1000px, #559459 1150px, #6aa86e 1240px, #559459 1330px, #66a86c 1420px, #5c9f60 1600px, #6aa86e);
    color: #10180f;
  }

  .title {
    font-family: 'Open Sans', sans-serif;
    font-size: 12px;
    z-index: 1;
  }

  .ae {
    width: 14px;
    height: 14px;
    background: #21103c;
    border: 1px solid #8d6bc4;
    color: #c9a6f5;
    font-size: 9px;
    line-height: 12px;
    text-align: center;
  }

  .ghost {
    position: absolute;
    top: 12px;
    width: 130px;
    height: 7px;
    background: #3b6c3f;
    filter: blur(4px);
  }

  .g1 {
    left: 320px;
  }

  .g2 {
    left: 470px;
  }

  .g3 {
    left: 650px;
    top: 4px;
    width: 200px;
    height: 20px;
    background: #8ad084;
  }

  .winbtns {
    display: flex;
    align-self: flex-start;
    height: 18px;
    margin-left: auto;
    margin-right: 3px;
    border: 1px solid #35523a;
    border-top: 0;
    border-radius: 0 0 4px 4px;
    overflow: hidden;
    z-index: 1;
  }

  .winbtns button {
    display: grid;
    place-items: center;
    width: 28px;
    border-right: 1px solid #4c6e50;
    background: linear-gradient(#bcd3bd 45%, #7da580 50%, #93bb96);
  }

  .winbtns .close {
    width: 46px;
    border: 0;
    background: linear-gradient(#e4a38e 45%, #bd3618 50%, #d9683c);
  }

  .menubar {
    display: flex;
    align-items: center;
    gap: 12px;
    height: 21px;
    padding: 0 8px;
    background: linear-gradient(#fff 1px, #eef2fa 6px, #d5dcef 7px, #dfe4f6 18px, #a9adc0 19px, #fff 20px);
    color: #111;
    font-family: 'Open Sans', sans-serif;
    font-size: 12px;
  }

  /* toolbar */
  .toolbar {
    display: flex;
    align-items: center;
    height: 26px;
    padding: 0 4px;
    border-bottom: 2px solid #050505;
    background: #2d2d2d;
  }

  .low {
    padding-top: 2px;
  }

  .grip {
    width: 4px;
    height: 18px;
    margin-right: 3px;
    background: repeating-linear-gradient(#141414 0 1px, #333 1px 2px);
  }

  .tool {
    display: grid;
    place-items: center;
    width: 25px;
    height: 22px;
  }

  .sep {
    width: 1px;
    height: 20px;
    margin: 0 3px;
    background: #1c1c1c;
    flex: none;
  }

  .sep.wide {
    margin-left: 24px;
  }

  .axes {
    display: flex;
    gap: 6px;
    padding: 0 10px 0 18px;
  }

  .snap {
    display: flex;
    align-items: center;
    gap: 3px;
  }

  .snap input {
    appearance: none;
    width: 14px;
    height: 14px;
    background: #1e1e1e;
  }

  .snaps {
    display: flex;
    gap: 10px;
    padding: 0 14px 0 8px;
  }

  .blue,
  .bluetext,
  .px b,
  em {
    color: #0b84c0;
    font-weight: normal;
  }

  .blue {
    padding-left: 4px;
  }

  .fill {
    width: 23px;
    height: 20px;
    margin: 0 9px 0 3px;
    background: #222;
    color: #bbb;
    font-size: 15px;
    line-height: 20px;
  }

  .swatch {
    width: 23px;
    height: 17px;
    margin-left: 3px;
    border: 3px solid #fff;
    background: #222;
    outline: 1px solid #222;
    outline-offset: -5px;
  }

  .px {
    margin-left: 12px;
  }

  .add {
    display: flex;
    align-items: center;
    gap: 5px;
    margin-left: 28px;
  }

  .ws {
    margin: 0 6px 0 9px;
    color: #8a8a8a;
  }

  .drop {
    display: grid;
    align-items: center;
    flex: none;
    background: #222;
    color: #d8d8d8;
  }

  .drop > * {
    grid-area: 1 / 1;
  }

  .drop select {
    appearance: none;
    width: 100%;
    padding-left: 7px;
    line-height: 14px;
  }

  .drop i,
  .alpha i {
    justify-self: end;
    margin-right: 5px;
    border: 5px solid transparent;
    border-top-color: #d4d4d4;
    border-bottom: 0;
    pointer-events: none;
  }

  .drop.tall {
    height: 19px;
  }

  .drop.standard {
    width: 140px;
    height: 20px;
    padding-top: 2px;
  }

  .help {
    display: flex;
    align-items: center;
    gap: 9px;
    width: 195px;
    height: 20px;
    margin: 0 1px 0 4px;
    padding-left: 2px;
    background: #222;
    color: #d0d0d0;
  }

  .help input {
    width: 150px;
  }

  /* upper panels */
  .upper {
    display: flex;
    gap: 4px;
    height: 288px;
    margin: 1px 2px 0 1px;
  }

  .panel {
    display: flex;
    flex-direction: column;
    background: #2d2d2d;
  }

  .effects {
    width: 394px;
    flex: none;
  }

  .tabs {
    display: flex;
    height: 28px;
    background: #1e1e1e;
    flex: none;
  }

  .tab {
    display: flex;
    align-items: center;
    gap: 9px;
    padding: 0 11px;
    border-right: 1px solid #181818;
  }

  .tab.on {
    background: #2d2d2d;
    color: #d8d8d8;
    border: 0;
  }

  .tab.dim {
    color: #6c6c6c;
  }

  .tab.project {
    width: 77px;
  }

  .x {
    color: #999;
    font-size: 12px;
    line-height: 10px;
  }

  .chip {
    width: 10px;
    height: 10px;
    margin-left: -1px;
    background: #a89878;
  }

  .violet {
    background: #6b80de;
  }

  .tab.on em {
    margin-left: 2px;
  }

  .tab.on > :global(svg:last-child) {
    margin-left: 3px;
  }

  .crumb {
    height: 20px;
    padding: 3px 5px;
    border-bottom: 1px solid #0c0c0c;
  }

  .fxbody {
    display: flex;
    justify-content: flex-end;
    flex: 1;
    margin-bottom: 18px;
  }

  .fxbody span {
    width: 17px;
    background: #232323;
  }

  .comp {
    flex: 1;
    min-width: 0;
  }

  .flowbar {
    display: flex;
    height: 24px;
    padding: 2px 0 3px 18px;
    border-bottom: 1px solid #111;
  }

  .flowbar button {
    width: 59px;
    background: #050505;
    color: #2aa8e8;
  }

  .viewer {
    display: flex;
    flex: 1;
    border-top: 1px solid #3a3a3a;
    border-bottom: 1px solid #0c0c0c;
  }

  .canvas {
    flex: 1;
    margin-right: 128px;
    background: #000;
    position: relative;
  }

  .badge {
    position: absolute;
    left: 45%;
    top: 50%;
    width: 146px;
    height: 146px;
    margin: -87px 0 0 -73px;
    padding-left: 12px;
    border: 8px solid #fff;
    border-radius: 50%;
    color: #0af5d8;
    font: bold 110px/124px 'Lato', sans-serif;
    text-align: center;
  }

  .viewbar {
    display: flex;
    align-items: center;
    gap: 6px;
    height: 24px;
    padding: 0 0 2px 4px;
    border-top: 1px solid #383838;
  }

  .drop.mag {
    width: 71px;
    margin: 0 -4px 0 -2px;
  }

  .tc {
    width: 70px;
    margin: 0 -1px 0 -4px;
    padding: 3px 8px;
    background: #222;
    color: #d8d8d8;
    white-space: nowrap;
  }

  .drop.res {
    width: 87px;
    margin: 0 -2px 0 -4px;
  }

  .drop.cam {
    width: 106px;
    margin-left: -3px;
  }

  .drop.views {
    width: 70px;
    margin-left: -4px;
  }

  .viewbar .sep {
    margin: 0;
  }

  .side {
    width: 249px;
    flex: none;
    position: relative;
    z-index: 2;
  }

  .side .tab {
    gap: 11px;
    padding-right: 28px;
  }

  .side .tab.info {
    padding-right: 8px;
  }

  .side > .strip {
    height: 46px;
    border-bottom: 3px solid #050505;
  }

  .side > .second {
    height: 38px;
  }

  .chars {
    display: flex;
    flex-direction: column;
    flex: 1;
    padding: 90px 50px 6px 5px;
  }

  .crow {
    display: grid;
    grid-template-columns: 25px 45px 36px 31px 46px 20px;
    align-items: center;
    height: 20px;
  }

  .crow.last {
    grid-template-columns: 25px 45px 11px 114px;
    height: 31px;
    margin-top: 7px;
    border-top: 1px solid #202020;
    border-bottom: 1px solid #202020;
  }

  .cv b,
  .indents b {
    color: #0b84c0;
    font-weight: normal;
  }

  .cv.off {
    color: #666;
  }

  .tri {
    width: 0;
    border: 3px solid transparent;
    border-top: 6px solid #999;
    border-bottom: 0;
  }

  .floating {
    position: absolute;
    left: 6px;
    right: -2px;
    top: 18px;
    height: 186px;
    padding: 22px 0 4px 4px;
    border: 1px solid #c5d4c7;
    border-right: 0;
    background: linear-gradient(#55655680, #46544680), linear-gradient(90deg, #4c5a4e, #5d7a5f 50%, #4b5c4d);
    box-shadow: 0 0 4px #000;
  }

  .inner {
    display: flex;
    flex-direction: column;
    height: 100%;
    padding: 0 0 4px 1px;
    border: 3px double #d4ded5;
    border-right: 0;
    background: #2d2d2d;
  }

  .inner .tabs {
    height: 28px;
  }

  .side .inner .tab {
    gap: 9px;
    padding: 0 10px;
  }

  .beast {
    display: flex;
    flex-direction: column;
    flex: 1;
    margin-left: 1px;
    padding: 2px 10px 0 6px;
    border: 1px solid #111;
    border-right: 0;
  }

  .brow {
    display: flex;
    align-items: center;
    gap: 4px;
    height: 28px;
  }

  .brow.first {
    gap: 11px;
  }

  .sq {
    display: grid;
    place-items: center;
    width: 16px;
    height: 16px;
    border: 1px solid #0c0c0c;
    background: #363636;
    color: #aaa;
    flex: none;
    line-height: 12px;
  }

  .sq.lens {
    width: 19px;
    height: 19px;
    background: #1c1c1c;
    margin-left: -7px;
  }

  .sq.small {
    width: 14px;
    height: 14px;
  }

  .sq.full {
    width: 100%;
  }

  .sq.edit {
    width: 38px;
  }

  .pair {
    display: flex;
    height: 21px;
    padding: 0 2px;
    margin-right: 22px;
    border: 1px solid #0c0c0c;
  }

  .pair button {
    display: grid;
    place-items: center;
    width: 19px;
  }

  .pair .on {
    background: #1a1a1a;
  }

  .play {
    margin: 0 6px 0 4px;
    border: 4px solid transparent;
    border-left: 7px solid #080808;
    border-right: 0;
  }

  .target {
    flex: 1;
    min-width: 0;
    height: 16px;
    border: 1px solid #111;
    background: #999;
    color: #0c0c0c;
    text-align: center;
  }

  .bgrid {
    display: flex;
    gap: 5px;
    margin-top: 3px;
    padding-top: 6px;
    border-top: 1px solid #111;
  }

  .bleft {
    flex: 1;
    padding-right: 5px;
    border-right: 1px solid #151515;
  }

  .keys {
    display: flex;
    align-items: center;
    gap: 7px;
    margin-top: 10px;
  }

  .bright {
    display: flex;
    flex-direction: column;
    gap: 9px;
  }

  .bright div {
    display: flex;
    gap: 4px;
  }

  /* timeline */
  .lower {
    display: flex;
    flex: 1;
    gap: 4px;
    margin: 3px 2px 0 1px;
  }

  .timeline {
    display: flex;
    flex-direction: column;
    flex: 1;
    min-width: 0;
    background: #2d2d2d;
  }

  .tltabs {
    display: flex;
    height: 28px;
    background: #1e1e1e;
    border-bottom: 1px solid #33b4ea;
  }

  .tltab {
    display: flex;
    align-items: center;
    gap: 11px;
    padding: 0 28px 0 27px;
    border-right: 1px solid #171717;
    color: #6e6e6e;
  }

  .tltab.queue {
    padding-right: 25px;
  }

  .tltab.on {
    gap: 10px;
    height: 28px;
    padding: 0 9px;
    border: 1px solid #33b4ea;
    border-bottom: 0;
    background: #2d2d2d;
    color: #d8d8d8;
  }

  .tltab.on > :global(svg) {
    margin-left: 1px;
  }

  .tlmain {
    display: flex;
    flex: 1;
    border: 1px solid #33b4ea;
    border-width: 0 1px;
  }

  .layers {
    display: flex;
    flex-direction: column;
    width: 856px;
    flex: none;
    border-right: 1px solid #080808;
  }

  .tlhead {
    display: flex;
    align-items: center;
    height: 36px;
    border-bottom: 1px solid #080808;
  }

  .clock {
    width: 104px;
    padding-left: 10px;
    color: #0b84c0;
  }

  .clock strong {
    display: block;
    font: bold 15px/16px 'DejaVu Sans Condensed', 'DejaVu Sans', sans-serif;
  }

  .clock small {
    display: block;
    padding-left: 2px;
    font-size: 9px;
    line-height: 12px;
  }

  .find {
    display: flex;
    align-items: center;
    width: 524px;
    height: 20px;
    padding-left: 5px;
    background: #222;
  }

  .find input {
    flex: 1;
  }

  .tools {
    display: flex;
    align-items: center;
    justify-content: space-between;
    width: 196px;
    margin-left: 14px;
  }

  .row {
    display: flex;
    align-items: center;
    height: 17px;
    border-bottom: 1px solid #242424;
    flex: none;
  }

  .row.cols {
    height: 19px;
    border-color: #080808;
    font-size: 10px;
  }

  .row.layer {
    background: #363636;
  }

  .row.selected {
    background: #4f4f4f;
  }

  .av {
    display: flex;
    align-items: center;
    gap: 2px;
    width: 70px;
    padding-left: 4px;
    color: #bbb;
    flex: none;
  }

  .av.dimmed {
    color: #999;
  }

  .cols .av {
    gap: 3px;
    justify-content: space-between;
    padding-right: 10px;
  }

  .av i,
  .sw i {
    display: grid;
    place-items: center;
    width: 13px;
    height: 13px;
  }

  .cell {
    background: #1e1e1e;
  }

  .ident {
    display: flex;
    align-items: center;
    gap: 4px;
    width: 67px;
    flex: none;
  }

  .cols .ident {
    gap: 10px;
    padding-left: 12px;
    border-left: 1px solid #1a1a1a;
  }

  .ident b {
    margin-left: 6px;
  }

  .label {
    width: 12px;
    height: 12px;
  }

  .lname {
    display: flex;
    align-items: center;
    gap: 3px;
    width: 211px;
    flex: none;
  }

  .cols .lname {
    padding-left: 1px;
  }

  .lname b {
    padding-left: 3px;
  }

  .lname .boxed {
    flex: 1;
    height: 16px;
    padding: 0 0 0 2px;
    border: 2px solid #aaa;
    line-height: 11px;
  }

  .twirl {
    display: grid;
    place-items: center;
    width: 11px;
    height: 13px;
  }

  .twirl::before {
    content: '';
    border: 4px solid transparent;
    border-left: 8px solid #c8c8c8;
    border-right: 0;
  }

  .twirl.open::before {
    border: 4px solid transparent;
    border-top: 8px solid #d4d4d4;
    border-bottom: 0;
  }

  .twirl.leaf::before {
    width: 1px;
    height: 1px;
    border: 0;
    background: #454545;
  }

  .sw {
    display: flex;
    gap: 2px;
    width: 138px;
    padding-left: 3px;
    flex: none;
  }

  .drop.mode {
    width: 71px;
    height: 16px;
  }

  .t {
    width: 13px;
    height: 13px;
    margin: 0 5px 0 4px;
  }

  .matteslot {
    width: 67px;
    position: relative;
  }

  .drop.matte,
  .alpha {
    width: 67px;
    height: 16px;
  }

  .alpha {
    display: flex;
    align-items: center;
    justify-content: space-between;
    padding-left: 7px;
    background: #000;
    color: #d8d8d8;
  }

  .pw {
    padding: 0 6px 0 8px;
  }

  .drop.parent {
    width: 117px;
    height: 16px;
  }

  .tm {
    width: 105px;
    margin-left: 58px;
  }

  .par {
    width: 143px;
    padding-left: 5px;
    border-left: 1px solid #151515;
  }

  .ky {
    padding-left: 5px;
    border-left: 1px solid #151515;
  }

  .names {
    display: flex;
    align-items: center;
    width: 277px;
    height: 16px;
    padding-left: 18px;
    flex: none;
  }

  .names .twirl {
    width: 9px;
    margin-right: 9px;
  }

  .names.d1 {
    padding-left: 35px;
  }

  .names.d2 {
    padding-left: 52px;
  }

  .names.d3 {
    padding-left: 69px;
  }

  .names.d4 {
    padding-left: 86px;
  }

  .slot {
    width: 19px;
    margin-left: -2px;
    flex: none;
  }

  .nm.hl {
    flex: 1;
    height: 16px;
    margin-left: -2px;
    padding: 1px 3px;
    background: #505050;
  }

  .vals {
    display: flex;
    align-items: center;
    width: 144px;
    height: 16px;
    padding-left: 4px;
    flex: none;
  }

  .val {
    color: #0b84c0;
  }

  .val.red {
    color: #c52a2e;
  }

  .addc {
    display: flex;
    align-items: center;
    gap: 4px;
    margin-left: 88px;
  }

  .drop.blend {
    width: 128px;
    height: 16px;
  }

  .dir {
    display: grid;
    place-items: center;
    width: 18px;
    height: 16px;
    background: #222;
  }

  .dir.on {
    background: #000;
  }

  .lk {
    display: grid;
    place-items: center;
    width: 14px;
    height: 14px;
    margin-right: 4px;
    background: #1e1e1e;
  }

  .ex {
    display: flex;
    align-items: center;
    gap: 5px;
    padding-left: 19px;
  }

  .nav {
    display: flex;
    align-items: center;
    gap: 8px;
    margin-left: 310px;
  }

  .nav i {
    border: 4px solid transparent;
  }

  .nav .prev {
    border-left: 0;
    border-right: 5px solid #555;
  }

  .nav .next {
    border-right: 0;
    border-left: 5px solid #bbb;
  }

  /* track matte popup */
  .popup {
    position: absolute;
    left: 0;
    bottom: 15px;
    z-index: 3;
    display: flex;
    flex-direction: column;
    width: 249px;
    padding: 1px 2px 2px 28px;
    border: 1px solid #8c8c8c;
    background: linear-gradient(90deg, #f0f0f0 28px, #dcdcdc 28px 29px, #fff 29px 30px, #f0f0f0 30px);
    box-shadow: 2px 2px 2px #0009;
    color: #0c0c0c;
    font-family: 'Open Sans', sans-serif;
    font-size: 12px;
  }

  .popup button {
    height: 22px;
    padding: 0 6px;
    text-align: left;
    position: relative;
  }

  .popup button[aria-checked='true']::before {
    content: '';
    position: absolute;
    left: -26px;
    top: 0;
    width: 22px;
    height: 22px;
    box-sizing: border-box;
    border: 1px solid #a5c9f0;
    border-radius: 3px;
    background: radial-gradient(circle at 10px 10px, #a8a8f0, #20206c 4px, #eaf1fa 5px);
  }

  hr {
    width: 100%;
    height: 2px;
    margin: 3px 0;
    border: 0;
    border-top: 1px solid #d8d8d8;
    background: #fff;
  }

  /* time side */
  .time {
    display: flex;
    flex-direction: column;
    flex: 1;
    min-width: 0;
    position: relative;
    background: #2d2d2d;
  }

  .ruler {
    height: 55px;
    padding-top: 5px;
    border-bottom: 1px solid #080808;
  }

  .navbar,
  .work {
    border: 1px solid #080808;
    border-width: 1px 0;
    background: linear-gradient(90deg, #2fb9ee 7px, #666 7px calc(100% - 7px), #2fb9ee calc(100% - 7px));
  }

  .navbar {
    height: 11px;
    border-radius: 5px 5px 0 0;
  }

  .ticks {
    position: relative;
    height: 18px;
    margin: 0 7px;
    font-size: 10px;
  }

  .ticks span {
    position: absolute;
    top: 0;
    width: 30px;
    height: 18px;
    margin-left: -15px;
    background: linear-gradient(#999, #999) 15px 14px / 1px 4px no-repeat;
    line-height: 14px;
    text-align: center;
  }

  .ticks span:first-child {
    padding-left: 18px;
    background: none;
  }

  .work {
    height: 17px;
  }

  .cache {
    height: 3px;
    padding: 0 7px;
    background: #080808;
  }

  .cache div {
    height: 3px;
    background: #14bc22;
    position: relative;
  }

  .cache i {
    position: absolute;
    width: 1px;
    height: 3px;
    background: #123;
  }

  .trk {
    display: flex;
    align-items: center;
    height: 17px;
    border-bottom: 1px solid #262626;
    background: linear-gradient(90deg, #3b3b3b calc(100% - 7px), #2d2d2d calc(100% - 7px));
    flex: none;
  }

  .trk.layer {
    padding: 0 7px;
  }

  .trk.selected {
    background: #4f4f4f;
  }

  .bar {
    flex: 1;
    height: 16px;
    border-top: 1px solid #6f7cc0;
    background: #525f9a;
  }

  .bar.active {
    border-color: #7f92ea;
    background: #4f63ca;
  }

  .bar.text {
    border-color: #8c4a4a;
    background: #7f3c3c;
  }

  .code {
    flex: 1;
    height: 16px;
    padding: 0 0 1px 3px;
  }

  .ib {
    padding-left: 3px;
  }

  .keyline {
    display: flex;
    flex: 1;
    padding: 0 3px;
    margin-right: 8px;
  }

  .keyline span {
    width: 0;
  }

  .rest {
    flex: 1;
    min-height: 17px;
  }

  .time .rest {
    background: linear-gradient(90deg, #3b3b3b calc(100% - 7px), #2d2d2d calc(100% - 7px));
  }

  .playhead {
    position: absolute;
    left: 7px;
    top: 6px;
    bottom: 0;
    width: 1px;
    background: #e01414;
  }

  .playhead > :global(svg) {
    margin: 14px 0 0 -6px;
  }

  .gutter {
    display: flex;
    flex-direction: column;
    align-items: center;
    width: 17px;
    padding-top: 37px;
    background: #2d2d2d;
    flex: none;
  }

  .gutter span {
    padding: 6px 0 3px;
  }

  .gutter div {
    flex: 1;
    width: 100%;
    background: #1b1b1b;
  }

  .tlfoot {
    display: flex;
    height: 17px;
    border-top: 1px solid #080808;
    border-left: 1px solid #33b4ea;
    border-right: 1px solid #33b4ea;
    background: #1b1b1b;
  }

  .switches {
    display: flex;
    align-items: center;
    gap: 6px;
    width: 856px;
    padding-left: 5px;
    background: #2d2d2d;
  }

  .zoomer {
    display: flex;
    align-items: center;
    gap: 12px;
    width: 107px;
    padding-left: 4px;
    background: #2d2d2d;
  }

  .zoomer input {
    appearance: none;
    width: 48px;
    height: 11px;
    background: linear-gradient(#111, #111) 0 5px / 100% 1px no-repeat;
  }

  .zoomer input::-webkit-slider-thumb {
    appearance: none;
    width: 10px;
    height: 11px;
    background: #999;
    border-radius: 5px 5px 0 0;
  }

  /* paragraph */
  .paragraph {
    width: 205px;
    flex: none;
  }

  .align {
    display: flex;
    gap: 11px;
    height: 32px;
    margin: 0 18px 0 7px;
    padding: 8px 0 0 3px;
    border-bottom: 1px solid #1e1e1e;
  }

  .align button {
    height: 14px;
  }

  .align span {
    margin-left: -6px;
  }

  .align .active {
    color: #2fb4ec;
  }

  .indents {
    display: grid;
    grid-template-columns: 71px 66px 50px;
    gap: 5px 0;
    padding: 4px 7px;
    white-space: nowrap;
  }

  .indents span {
    display: flex;
    gap: 5px;
  }
</style>
